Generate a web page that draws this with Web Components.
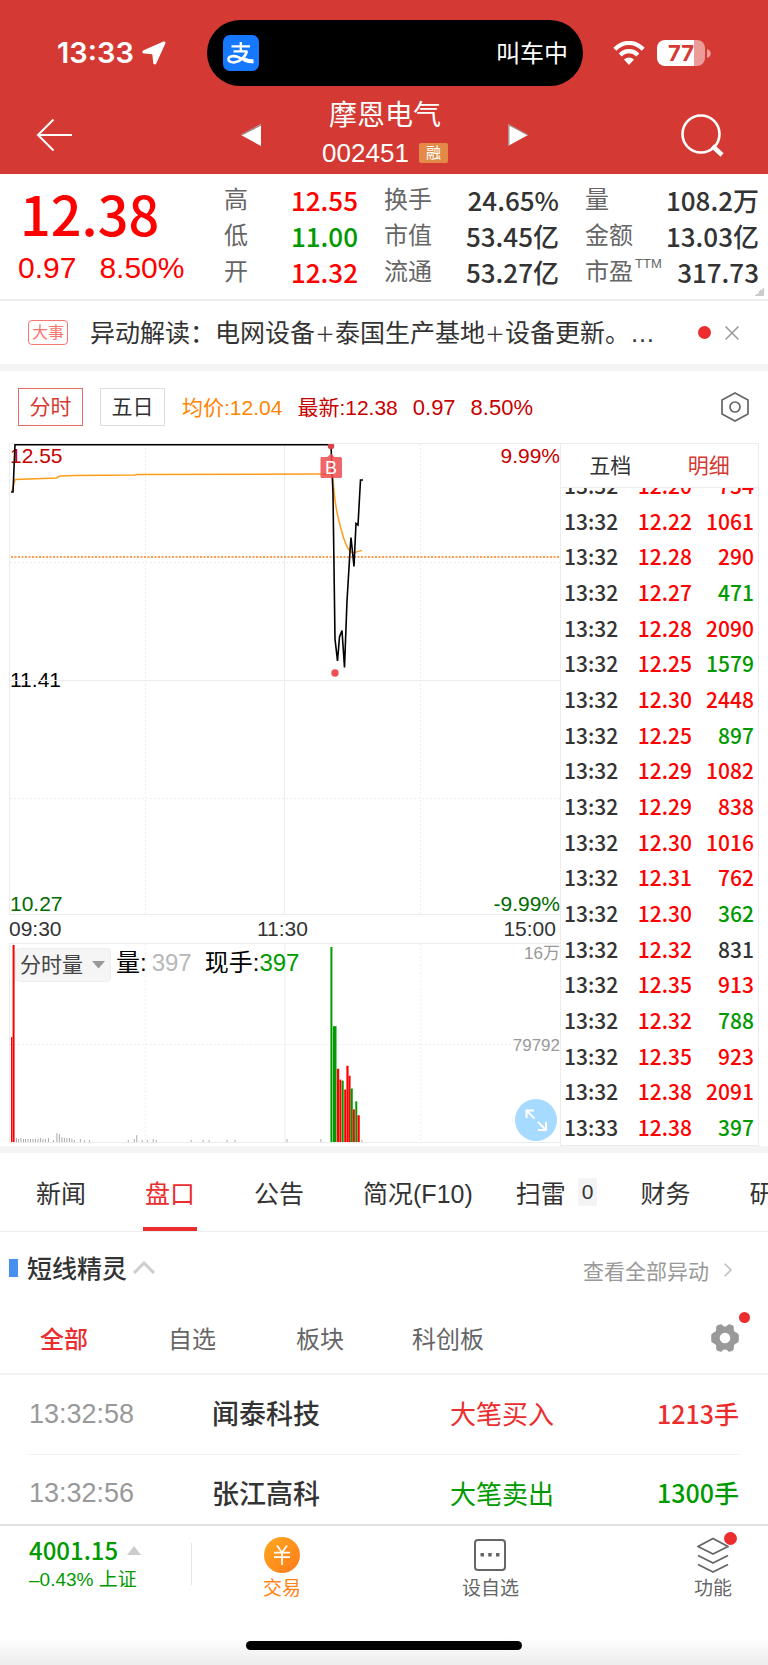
<!DOCTYPE html>
<html lang="zh-CN">
<head>
<meta charset="utf-8">
<meta name="viewport" content="width=device-width, initial-scale=1">
<title>摩恩电气 002451</title>
<style>
    body {
        margin: 0;
        background: #fff;
        color: #333;
        font-family: "Liberation Sans", "Noto Sans CJK SC", sans-serif;
        --digits: "Noto Sans CJK SC", sans-serif;
        --up: #ff0000;
        --down: #009a00;
        --accent: #eb2d2e;
        --brand: #d43a33;
        --line: #ececec;
        --band: #f4f4f4;
    }
</style>
</head>
<body>
<stock-app></stock-app>

<script>
class BaseElement extends HTMLElement {
    constructor() {
        super();
        this.attachShadow({ mode: 'open' });
    }

    connectedCallback() {
        this.shadowRoot.innerHTML = `
        <style>
        :host { display: block; }
        * { box-sizing: border-box; }
        button, select {
            margin: 0;
            padding: 0;
            border: 0;
            background: none;
            font: inherit;
            color: inherit;
            cursor: pointer;
        }
        a { color: inherit; text-decoration: none; }
        svg { display: block; }
        table { border-collapse: collapse; }
        td { padding: 0; }
        .up { color: var(--up); }
        .down { color: var(--down); }
        </style>
        ${this.render()}`;
    }
}

class StatusBar extends BaseElement {
    render() {
        return `
        <style>
        :host { padding-top: 20px; background: var(--brand); color: #fff; }
        .row { display: grid; grid-template-columns: 207fr 376fr 185fr; height: 66px; align-items: center; }
        .time { display: flex; align-items: center; gap: 8px; padding-left: 57px; font: 600 29px/32px Inter, sans-serif; }
        .island {
            display: flex;
            align-items: center;
            justify-content: space-between;
            height: 66px;
            padding: 0 15px 0 16px;
            border-radius: 33px;
            background: #000;
            font-size: 24px;
        }
        .island span { padding-bottom: 4px; }
        .signals { display: flex; align-items: center; gap: 12px; padding-left: 30px; }
        .battery { display: flex; align-items: center; gap: 2px; }
        .level {
            width: 48px;
            height: 26px;
            border-radius: 8px;
            background: linear-gradient(90deg, #fff 77%, #eb9c99 77%);
            color: var(--brand);
            font: 700 22px/26px Inter, sans-serif;
            text-align: center;
        }
        </style>
        <div class="row">
            <div class="time">13:33
                <svg width="24" height="24" viewBox="0 0 24 24" fill="#fff"><path d="M21.500 .6 1.600 9.300C-.3 10.200 0 12.300 2 12.500L10.300 13.200 11.200 21.700C11.400 23.800 13.600 24 14.400 22.200L23.300 2.500C23.900 1 22.800 0 21.500 .6Z"/></svg>
            </div>
            <div class="island">
                <svg width="36" height="36" viewBox="0 0 36 36">
                    <rect width="36" height="36" rx="7" fill="#1677ff"/>
                    <g fill="none" stroke="#fff" stroke-width="2.300">
                        <path d="M8.500 11.300H27M10.500 16.300H24.500M17.800 7V16"/>
                        <path d="M24 16.500C22.500 21 18 26.300 12 27.300 7.500 28 5 25.800 5.500 23.600 6.300 20.600 11.500 20.600 15.500 22.300 20 24.200 25 26.500 30 27" stroke-width="2.600"/>
                        <path d="M21 24.300C24 25.600 27 26.600 30.500 26.300" stroke-width="4"/>
                    </g>
                </svg>
                <span>叫车中</span>
            </div>
            <div class="signals">
                <svg width="32" height="24" viewBox="0 0 32 24">
                    <g fill="none" stroke="#fff" stroke-width="4.200"><path d="M1.800 8.300C10-.2 22-.2 30.200 8.300M7.200 13.900C12.200 8.900 19.800 8.900 24.800 13.900"/></g>
                    <path d="M16 24 11 18.500C13.800 15.800 18.200 15.800 21 18.500Z" fill="#fff"/>
                </svg>
                <div class="battery">
                    <div class="level">77</div>
                    <svg width="4" height="9" viewBox="0 0 4 9"><path d="M0 0C5 1.500 5 7.500 0 9Z" fill="#eb9c99"/></svg>
                </div>
            </div>
        </div>`;
    }
}

class StockNav extends BaseElement {
    render() {
        return `
        <style>
        :host { background: var(--brand); color: #fff; }
        nav { display: grid; grid-template-columns: 1fr 288px 1fr; align-items: center; height: 88px; padding: 10px 34px 0 36px; }
        .stock { display: flex; align-items: center; justify-content: space-between; }
        .name { text-align: center; }
        h1 { margin: 0; font-size: 28px; line-height: 36px; font-weight: 400; }
        .code { display: flex; align-items: center; justify-content: center; gap: 10px; font-size: 26px; line-height: 38px; }
        .tag { padding: 0 7px; border-radius: 2px; background: #e38b46; font-size: 15px; line-height: 20px; }
        .search { justify-self: end; margin-right: 10px; }
        </style>
        <nav>
            <button aria-label="返回"><svg width="37" height="34" viewBox="0 0 37 34" fill="none" stroke="#fff" stroke-width="2"><path d="M36 17H2M17.500 1.500 2 17 17.500 32.500"/></svg></button>
            <div class="stock">
                <button aria-label="上一只"><svg width="21" height="22" viewBox="0 0 21 22"><path d="M0 11 20 0V22Z" fill="#fff"/><path d="M1 10.500 20 .8" stroke="#a3837f" stroke-width="1.500"/></svg></button>
                <div class="name">
                    <h1>摩恩电气</h1>
                    <div class="code">002451<span class="tag">融</span></div>
                </div>
                <button aria-label="下一只"><svg width="21" height="22" viewBox="0 0 21 22"><path d="M20 11 0 0V22Z" fill="#fff"/><path d="M.8 22V.8L20 11" fill="none" stroke="#a3837f" stroke-width="1.300"/></svg></button>
            </div>
            <button class="search" aria-label="搜索"><svg width="43" height="43" viewBox="0 0 43 43" fill="none" stroke="#fff"><circle cx="20" cy="20" r="18.500" stroke-width="2.600"/><path d="M31.500 32 41 41" stroke-width="4.500"/></svg></button>
        </nav>`;
    }
}

class QuotePanel extends BaseElement {
    render() {
        const groups = [
            [['高', '12.55', 'up'], ['低', '11.00', 'down'], ['开', '12.32', 'up']],
            [['换手', '24.65%', ''], ['市值', '53.45亿', ''], ['流通', '53.27亿', '']],
            [['量', '108.2万', ''], ['金额', '13.03亿', ''], ['市盈<sup>TTM</sup>', '317.73', '']]
        ];
        return `
        <style>
        :host { border-bottom: 2px solid var(--line); }
        .panel {
            display: grid;
            grid-template-columns: 180fr 134fr 175fr 174fr;
            column-gap: 26px;
            height: 125px;
            padding: 8px 9px 0 18px;
            background: linear-gradient(135deg, transparent 50%, #ccc 50%) right 4px bottom 3px / 9px 9px no-repeat;
        }
        .price { padding-left: 2px; font: 500 54px/62px var(--digits); }
        .change { display: flex; gap: 23px; font-size: 30px; line-height: 48px; white-space: nowrap; }
        dl { margin: 0; }
        dl div { display: flex; justify-content: space-between; line-height: 36px; white-space: nowrap; }
        dt { color: #666; font-size: 24px; }
        dd { margin: 0; font-family: var(--digits); font-size: 26px; font-weight: 500; }
        sup { padding-left: 2px; font-size: 13px; line-height: 13px; vertical-align: 12px; }
        </style>
        <div class="panel">
            <div class="up">
                <div class="price">12.38</div>
                <div class="change"><span>0.97</span><span>8.50%</span></div>
            </div>
            ${groups.map(g => `<dl>${g.map(([label, value, tone]) => `<div><dt>${label}</dt><dd class="${tone}">${value}</dd></div>`).join('')}</dl>`).join('')}
        </div>`;
    }
}

class NewsStrip extends BaseElement {
    render() {
        return `
        <style>
        :host { border-bottom: 7px solid var(--band); }
        .strip { display: flex; align-items: center; height: 63px; padding: 0 29px 0 28px; }
        .tag { width: 40px; border: 1px solid #f8766f; border-radius: 4px; color: #f8766f; font-size: 16px; line-height: 23px; text-align: center; }
        a { flex: 1; padding: 0 0 4px 22px; font-size: 25px; white-space: nowrap; }
        .plus { font-size: 20px; }
        .dot { width: 13px; height: 13px; margin-right: 14px; border-radius: 50%; background: var(--accent); }
        </style>
        <div class="strip">
            <span class="tag">大事</span>
            <a href="#news">异动解读：电网设备<span class="plus">＋</span>泰国生产基地<span class="plus">＋</span>设备更新。…</a>
            <span class="dot"></span>
            <button aria-label="关闭"><svg width="14" height="14" viewBox="0 0 14 14" stroke="#999" stroke-width="1.500"><path d="M.5 .5 13.500 13.500M13.500 .5 .5 13.500"/></svg></button>
        </div>`;
    }
}

class ChartToolbar extends BaseElement {
    render() {
        return `
        <style>
        .bar { display: flex; align-items: center; height: 72px; padding: 0 18px; font-size: 21px; white-space: nowrap; }
        .range { width: 65px; height: 38px; margin-right: 17px; border: 1px solid #ddd; line-height: 36px; }
        .range.on { border-color: #e86a66; color: var(--brand); }
        .info { display: flex; flex: 1; align-items: baseline; gap: 15px; padding-bottom: 2px; color: #c80000; }
        .avg { color: #ff8400; }
        .rise { font-size: 22px; }
        .settings { margin-right: 1px; }
        </style>
        <div class="bar">
            <button class="range on">分时</button>
            <button class="range">五日</button>
            <div class="info"><span class="avg">均价:12.04</span><span>最新:12.38</span><span class="rise">0.97</span><span class="rise">8.50%</span></div>
            <button class="settings" aria-label="设置"><svg width="28" height="30" viewBox="0 0 28 30" fill="none" stroke="#666" stroke-width="1.700"><path d="M14 1 27 8V22L14 29 1 22V8Z"/><circle cx="14" cy="15" r="5"/></svg></button>
        </div>`;
    }
}

class PriceChart extends BaseElement {
    render() {
        const red = '#ff0000';
        const green = '#009a00';
        // x, width, top
        const bars = [
            [1, 1.3, 94, red], [2.6, 2, 1, red],
            [321, 2, 3, green], [323.5, 3.6, 83, green],
            [327.5, 2.3, 126, red], [330, 2, 137, red], [332.3, 2, 138, green],
            [334.8, 1.9, 147, red], [337, 2.2, 123, red], [339.2, 2, 133, red],
            [341.2, 2.2, 146, green], [343.5, 2, 167, red], [345.9, 2, 159, green], [348.1, 2.3, 173, red]
        ];
        // quiet minutes: x, height
        const quiet = [[6, 3], [8, 2], [10.500, 3], [13, 2], [15, 2], [17.500, 2], [20, 2], [22.500, 2], [25, 2], [27.500, 2], [30, 3], [32.500, 2], [35, 2], [38, 3], [43, 1],
            [46.500, 8], [49, 7], [51.500, 4], [54, 3], [56.500, 3], [59, 3], [61.500, 2], [64, 1], [70, 2], [74, 1], [79, 1], [118, 1], [124, 2], [126.500, 6],
            [132, 1], [137, 1], [143, 2], [146, 1], [181, 1], [193, 1], [199, 1], [217, 1], [225, 1], [277, 2], [311, 2], [352, 1]];
        return `
        <style>
        :host { font-size: 21px; color: #333; }
        .pane { display: grid; border-top: 1px solid var(--line); border-bottom: 1px solid var(--line); border-left: 1px solid var(--line); }
        .pane > * { grid-area: 1 / 1; min-width: 0; min-height: 0; }
        .price { height: 472px; }
        .volume { height: 200px; }
        .plot { width: 100%; height: 100%; }
        .scale { display: grid; grid-template-columns: 1fr 1fr; align-content: space-between; padding-top: 1px; line-height: 21px; }
        .scale :nth-child(even) { text-align: right; }
        .high { color: #c80000; }
        .mid { color: #000; }
        .low { color: #006a00; }
        .axis { display: grid; grid-template-columns: 1fr 1fr 1fr; padding: 0 4px 0 0; line-height: 28px; }
        .axis :nth-child(2) { text-align: center; }
        .axis :nth-child(3) { text-align: right; }
        .legend { display: flex; align-items: center; align-self: start; gap: 5px; padding: 4px 0 0 5px; font-size: 24px; line-height: 30px; color: #000; }
        .legend > span { padding-bottom: 4px; }
        .legend .picker { display: grid; align-items: center; padding: 0; }
        .picker > * { grid-area: 1 / 1; }
        .picker svg { justify-self: end; margin-right: 6px; pointer-events: none; }
        select { appearance: none; width: 96px; height: 34px; padding-left: 4px; border: 1px solid #eee; border-radius: 4px; background: #f5f5f5; color: #444; font-size: 21px; }
        .grey { color: #b8b8b8; padding-right: 8px; }
        .amounts { display: grid; grid-template-rows: 20px 1fr 42px; justify-items: end; align-items: center; color: #999; font-size: 17px; line-height: 20px; padding-bottom: 1px; }
        .amounts button { margin-right: 3px; }
        .amounts .half { padding-top: 28px; }
        </style>
        <div class="pane price">
            <div class="scale">
                <span class="high">12.55</span><span class="high">9.99%</span>
                <span class="mid">11.41</span><span></span>
                <span class="low">10.27</span><span class="low">-9.99%</span>
            </div>
            <svg class="plot" viewBox="0 0 550 470" preserveAspectRatio="none" fill="none">
                <g stroke="#ececec">
                    <path d="M274.500 0V470M0 236.500H550"/>
                    <path d="M135.500 0V470M410.500 0V470M0 118.500H550M0 354.500H550" stroke-dasharray="2 2"/>
                </g>
                <path d="M1 113H550" stroke="#ff7f1a" stroke-width="1.500" stroke-dasharray="2 1.500"/>
                <path d="M2 47 5 35.500 46 34 50 32 65 31.500 125 31 127 30.500 310 30H322L323 35C324 50 326 66 329 77 333 94 338 107 342 108.500 346 109 348 107 352 106.500" stroke="#ff9c1a" stroke-width="1.500"/>
                <path d="M1 48H3L5 .8H321L323 50 325 195 327.500 217 329.500 193 332 186.500 334.500 223.500 337 157 340 107 341 93.500 344 122.500 346 79.500 348 81 350.500 36H353" stroke="#000" stroke-width="1.600"/>
                <circle cx="321" cy="2" r="3.300" fill="#d9434a"/>
                <path d="M311 13H317.500L321 9.500 324.500 13H330.500A1.500 1.500 0 0 1 332 14.500V32.500A1.500 1.500 0 0 1 330.500 34H312A1.500 1.500 0 0 1 310.500 32.500V14.500Z" fill="#ee4b4e" fill-opacity=".85"/>
                <text x="321" y="30" text-anchor="middle" font-size="18" fill="#fff">B</text>
                <circle cx="325" cy="229" r="3.700" fill="#ee5055"/>
            </svg>
        </div>
        <div class="axis"><span>09:30</span><span>11:30</span><span>15:00</span></div>
        <div class="pane volume">
            <svg class="plot" viewBox="0 0 551 200" preserveAspectRatio="none">
                <g stroke="#ececec">
                    <path d="M275.500 0V200"/>
                    <path d="M135.500 0V200M411.500 0V200M0 101.500H551" stroke-dasharray="2 2"/>
                </g>
                ${bars.map(([x, w, top, fill]) => `<rect x="${x}" y="${top}" width="${w}" height="${200 - top}" fill="${fill}"/>`).join('')}
                ${quiet.map(([x, h]) => `<rect x="${x}" y="${199 - h}" width="1" height="${h + 1}" fill="#aaa"/>`).join('')}
            </svg>
            <div class="legend">
                <span class="picker">
                    <select aria-label="指标"><option>分时量</option></select>
                    <svg width="13" height="8" viewBox="0 0 13 8"><path d="M0 0H13L6.500 7.500Z" fill="#999"/></svg>
                </span>
                <span>量:</span><span class="grey">397</span>
                <span>现手:<span class="down">397</span></span>
            </div>
            <div class="amounts">
                <span>16万</span>
                <span class="half">79792</span>
                <button aria-label="全屏"><svg width="42" height="42" viewBox="0 0 42 42"><circle cx="21" cy="21" r="21" fill="#a6dbff"/><path d="M11.500 19V11.500H19M12 12 19.500 19.500M23 23 30.500 30.500M31 23V31H23" fill="none" stroke="#fff" stroke-width="2"/></svg></button>
            </div>
        </div>`;
    }
}

class TickList extends BaseElement {
    render() {
        const ticks = [
            ['13:32', '12.20', '734', 'up'], ['13:32', '12.22', '1061', 'up'], ['13:32', '12.28', '290', 'up'],
            ['13:32', '12.27', '471', 'down'], ['13:32', '12.28', '2090', 'up'], ['13:32', '12.25', '1579', 'down'],
            ['13:32', '12.30', '2448', 'up'], ['13:32', '12.25', '897', 'down'], ['13:32', '12.29', '1082', 'up'],
            ['13:32', '12.29', '838', 'up'], ['13:32', '12.30', '1016', 'up'], ['13:32', '12.31', '762', 'up'],
            ['13:32', '12.30', '362', 'down'], ['13:32', '12.32', '831', ''], ['13:32', '12.35', '913', 'up'],
            ['13:32', '12.32', '788', 'down'], ['13:32', '12.35', '923', 'up'], ['13:32', '12.38', '2091', 'up'],
            ['13:33', '12.38', '397', 'down']
        ];
        return `
        <style>
        :host { display: flex; flex-direction: column; height: 703px; border: 1px solid var(--line); }
        .head { display: grid; grid-template-columns: 1fr 1fr; flex: none; height: 44px; padding-bottom: 3px; border-bottom: 1px solid var(--line); font-size: 21px; }
        .on { color: var(--brand); }
        .body { display: flex; flex: 1; flex-direction: column; justify-content: flex-end; min-height: 0; overflow: hidden; }
        table { flex: none; width: 100%; height: 678px; table-layout: fixed; font: 500 21px/30px var(--digits); }
        td:first-child { width: 39%; padding-left: 3px; }
        td:last-child { width: 30%; padding-right: 4px; text-align: right; }
        </style>
        <div class="head"><button>五档</button><button class="on">明细</button></div>
        <div class="body">
            <table>
                ${ticks.map(([time, price, lots, tone]) => `<tr><td>${time}</td><td class="up">${price}</td><td class="${tone}">${lots}</td></tr>`).join('')}
            </table>
        </div>`;
    }
}

class PageTabs extends BaseElement {
    render() {
        return `
        <style>
        :host { border-top: 7px solid var(--band); border-bottom: 1px solid var(--line); overflow: hidden; }
        nav { display: flex; gap: 59px; height: 78px; padding-left: 36px; font-size: 25px; white-space: nowrap; }
        a { display: flex; flex: none; align-items: center; gap: 12px; }
        .wide { margin-right: -16px; }
        .on { margin: 0 -2px; padding: 4px 2px 0; border-bottom: 4px solid var(--accent); color: var(--accent); }
        .count { padding: 0 4px; background: var(--band); font-size: 21px; line-height: 28px; }
        </style>
        <nav>
            <a href="#news">新闻</a>
            <a href="#depth" class="on">盘口</a>
            <a href="#notice">公告</a>
            <a href="#f10" class="wide">简况(F10)</a>
            <a href="#risk" class="wide">扫雷<span class="count">0</span></a>
            <a href="#finance">财务</a>
            <a href="#report">研报</a>
        </nav>`;
    }
}

class AlertList extends BaseElement {
    render() {
        return `
        <style>
        header { display: flex; align-items: center; height: 73px; padding: 0 36px 2px 9px; }
        header::before { content: ""; width: 9px; height: 18px; background: #4690ef; }
        h2 { margin: 0 6px 0 9px; padding-bottom: 2px; font-size: 25px; font-weight: 500; }
        header a { display: flex; align-items: center; gap: 15px; margin-left: auto; padding-top: 4px; color: #999; font-size: 21px; }
        .filters { display: grid; grid-template-columns: repeat(6, 1fr); height: 70px; padding-bottom: 3px; border-bottom: 2px solid #f2f2f2; color: #666; font-size: 24px; }
        .filters .on { color: var(--accent); font-weight: 500; }
        .gear { position: relative; grid-column: 6; justify-self: end; align-self: center; margin-right: 29px; }
        .dot { position: absolute; top: -12px; right: -11px; width: 11px; height: 11px; border-radius: 50%; background: var(--accent); }
        .rows { padding: 0 29px; }
        table { width: 100%; table-layout: fixed; font-size: 26px; }
        td { height: 79px; padding-bottom: 3px; border-bottom: 1px solid #f2f2f2; white-space: nowrap; }
        td:nth-child(1) { width: 183px; padding-bottom: 0; color: #999; font-size: 27px; }
        td:nth-child(2) { width: 238px; font-size: 27px; font-weight: 500; }
        td:nth-child(4) { text-align: right; font: 500 25px/36px var(--digits); }
        .buy { color: var(--accent); }
        </style>
        <header>
            <h2>短线精灵</h2>
            <svg width="22" height="13" viewBox="0 0 22 13" fill="none" stroke="#ccc" stroke-width="3"><path d="M1 12 11 2 21 12"/></svg>
            <a href="#all">查看全部异动<svg width="8" height="14" viewBox="0 0 8 14" fill="none" stroke="#bbb" stroke-width="1.500"><path d="M.7 .7 7 7 .7 13.300"/></svg></a>
        </header>
        <div class="filters">
            <button class="on">全部</button><button>自选</button><button>板块</button><button>科创板</button>
            <button class="gear" aria-label="筛选设置">
                <svg width="28" height="28" viewBox="0 0 28 28" fill="#999"><path fill-rule="evenodd" d="M6.500 1.200 9.500 .3C11 0 11.500 2.500 14 2.500S17 0 18.500 .3L21.500 1.200C23.500 2.500 22.500 4.500 23 6.500 23.500 8.500 27 8.500 27.800 11V17C27 19.500 23.500 19.500 23 21.500 22.500 23.500 23.500 25.500 21.500 26.800L18.500 27.700C17 28 16.500 25.500 14 25.500S11 28 9.500 27.700L6.500 26.800C4.500 25.500 5.500 23.500 5 21.500 4.500 19.500 1 19.500 .2 17V11C1 8.500 4.500 8.500 5 6.500 5.500 4.500 4.500 2.500 6.500 1.200ZM14 8.700A5.300 5.300 0 1 0 14 19.300 5.300 5.300 0 0 0 14 8.700Z"/></svg>
                <span class="dot"></span>
            </button>
        </div>
        <div class="rows">
            <table>
                <tr><td>13:32:58</td><td>闻泰科技</td><td class="buy">大笔买入</td><td class="buy">1213手</td></tr>
                <tr><td>13:32:56</td><td>张江高科</td><td class="down">大笔卖出</td><td class="down">1300手</td></tr>
            </table>
        </div>`;
    }
}

class BottomBar extends BaseElement {
    render() {
        return `
        <style>
        :host { position: relative; border-top: 2px solid #e2e2e2; background: linear-gradient(#fff 80%, #ededed); }
        nav { display: grid; grid-template-columns: 192fr 180fr 237fr 159fr; justify-items: center; height: 115px; font-size: 19px; line-height: 24px; color: #666; }
        a { display: flex; flex-direction: column; align-items: center; gap: 4px; padding-top: 11px; }
        .index { justify-self: stretch; align-items: start; gap: 2px; padding: 10px 0 0 29px; color: var(--down); }
        .index strong { display: flex; align-items: center; gap: 9px; font: 500 24px/28px var(--digits); }
        .index small { font-size: 19px; line-height: 28px; white-space: nowrap; }
        .rule { justify-self: end; width: 1px; height: 42px; margin-top: 17px; background: #e6e6e6; }
        .first { display: grid; grid-template-columns: 1fr auto; justify-self: stretch; }
        .trade { color: #ff8316; }
        .more { justify-self: end; padding-right: 36px; }
        .badge { position: relative; }
        .badge::after { content: ""; position: absolute; top: -5px; right: -6px; width: 13px; height: 13px; border-radius: 50%; background: var(--accent); }
        .home { width: 36%; height: 9px; margin: 0 auto 15px; border-radius: 5px; background: #000; }
        </style>
        <nav>
            <div class="first">
                <a href="#index" class="index">
                    <strong>4001.15<svg width="14" height="9" viewBox="0 0 14 9"><path d="M7 0 14 9H0Z" fill="#ccc"/></svg></strong>
                    <small>–0.43% 上证</small>
                </a>
                <span class="rule"></span>
            </div>
            <a href="#trade" class="trade">
                <svg width="36" height="36" viewBox="0 0 36 36"><defs><linearGradient id="g" x1="0" y1="0" x2="1" y2="1"><stop stop-color="#ffa91f"/><stop offset="1" stop-color="#ff7a1a"/></linearGradient></defs><circle cx="18" cy="18" r="18" fill="url(#g)"/><path d="M13 8.500 18 15.500 23 8.500M10 15.700H26M10 20.200H26M18 15.500V28" fill="none" stroke="#fff" stroke-width="1.700"/></svg>
                交易
            </a>
            <a href="#watch">
                <svg width="36" height="36" viewBox="0 0 36 36"><rect x="3" y="3" width="30" height="30" rx="3" fill="none" stroke="#666" stroke-width="2"/><path d="M8.500 16H12V19.500H8.500ZM16.200 16H19.700V19.500H16.200ZM24 16H27.500V19.500H24Z" fill="#666"/></svg>
                设自选
            </a>
            <a href="#more" class="more">
                <span class="badge"><svg width="36" height="36" viewBox="0 0 36 36" fill="none" stroke="#666" stroke-width="1.900" stroke-linejoin="round"><path d="M18 1.500 33 9.500 18 17 3 9.500ZM3 18.500 18 26 33 18.500M3 27.500 18 35 33 27.500"/></svg></span>
                功能
            </a>
        </nav>
        <div class="home"></div>`;
    }
}

class StockApp extends BaseElement {
    render() {
        return `
        <style>
        :host { display: flex; flex-direction: column; height: 100vh; }
        main { flex: 1; min-height: 0; overflow: hidden; }
        .market { display: grid; grid-template-columns: 1fr 199px; padding: 0 9px; }
        status-bar, stock-nav, bottom-bar { flex: none; }
        </style>
        <status-bar></status-bar>
        <stock-nav></stock-nav>
        <main>
            <quote-panel></quote-panel>
            <news-strip></news-strip>
            <chart-toolbar></chart-toolbar>
            <div class="market"><price-chart></price-chart><tick-list></tick-list></div>
            <page-tabs></page-tabs>
            <alert-list></alert-list>
        </main>
        <bottom-bar></bottom-bar>`;
    }
}

customElements.define('status-bar', StatusBar);
customElements.define('stock-nav', StockNav);
customElements.define('quote-panel', QuotePanel);
customElements.define('news-strip', NewsStrip);
customElements.define('chart-toolbar', ChartToolbar);
customElements.define('price-chart', PriceChart);
customElements.define('tick-list', TickList);
customElements.define('page-tabs', PageTabs);
customElements.define('alert-list', AlertList);
customElements.define('bottom-bar', BottomBar);
customElements.define('stock-app', StockApp);
</script>
</body>
</html>
